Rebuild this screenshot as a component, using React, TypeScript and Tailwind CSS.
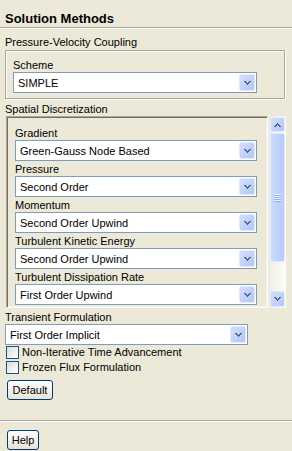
import React from "react";

const FONT = "font-['Liberation_Sans',Arial,sans-serif]";

function Chevron({ up }: { up?: boolean }) {
  return (
    <svg
      width="7"
      height="4"
      viewBox="0 0 7 4"
      shapeRendering="crispEdges"
      className={up ? "rotate-180" : ""}
    >
      <path fill="#4d6185" d="M0 0h2v1H0zM5 0h2v1H5zM1 1h2v1H1zM4 1h2v1H4zM2 2h3v1H2zM3 3h1v1H3z" />
    </svg>
  );
}

function ArrowBtn({ up, className }: { up?: boolean; className: string }) {
  return (
    <div
      className={`flex items-center justify-center rounded-[2px] border border-[#e3eafc] bg-gradient-to-br from-[#d3e0fd] to-[#b2c6f6] ${className}`}
    >
      <Chevron up={up} />
    </div>
  );
}

function Combo({ value, width }: { value: string; width: string }) {
  return (
    <div className={`flex h-[21px] border border-[#7f9db9] bg-white p-px ${width}`}>
      <div className="flex-1 overflow-hidden whitespace-nowrap pl-[3px] leading-[19px]">{value}</div>
      <ArrowBtn className="w-[16px]" />
    </div>
  );
}

function Label({ children, className = "" }: { children: React.ReactNode; className?: string }) {
  return <div className={`h-[15px] whitespace-nowrap leading-[17px] ${className}`}>{children}</div>;
}

function Check({ label }: { label: string }) {
  return (
    <div className="flex h-[15px] items-start pl-[6px]">
      <div className="mt-px h-[13px] w-[13px] border border-[#1c5180] bg-gradient-to-br from-[#dcdcd7] to-white" />
      <span className="ml-[3px] whitespace-nowrap leading-[15px]">{label}</span>
    </div>
  );
}

function XpButton({ label, width }: { label: string; width: string }) {
  return (
    <div
      className={`ml-[7px] flex h-[20px] items-center justify-center rounded-[3px] border border-[#003c74] bg-gradient-to-b from-white to-[#e6e3d6] leading-[18px] ${width}`}
    >
      {label}
    </div>
  );
}

function Separator() {
  return (
    <div>
      <div className="h-px bg-[#aca899]" />
      <div className="h-px bg-white" />
    </div>
  );
}

const spatial = [
  ["Gradient", "Green-Gauss Node Based"],
  ["Pressure", "Second Order"],
  ["Momentum", "Second Order Upwind"],
  ["Turbulent Kinetic Energy", "Second Order Upwind"],
  ["Turbulent Dissipation Rate", "First Order Upwind"],
];

export default function App() {
  return (
    <div className={`h-[451px] w-[292px] overflow-hidden bg-[#ece9d8] text-[11px] text-black ${FONT}`}>
      <div className="h-[27px] pl-[5px] pt-[11px] text-[13px] font-bold leading-[16px]">Solution Methods</div>
      <Separator />

      <Label className="mt-[5px] pl-[5px]">Pressure-Velocity Coupling</Label>
      <div className="ml-[5px] mt-px h-[49px] w-[280px] border border-[#aca899] pl-[7px] pt-[6px] shadow-[inset_1px_1px_0_#fff,1px_1px_0_#fff]">
        <Label>Scheme</Label>
        <Combo value="SIMPLE" width="w-[244px]" />
      </div>

      <Label className="mt-[2px] pl-[5px]">Spatial Discretization</Label>
      <div className="flex gap-px">
        <div className="ml-[6px] h-[192px] w-[262px] overflow-hidden border border-b-white border-l-[#aca899] border-r-white border-t-[#aca899] pl-[8px] pt-[8px] shadow-[inset_1px_1px_0_#716f64,inset_-1px_-1px_0_#f1efe2]">
          {spatial.map(([label, value], i) => (
            <div key={i}>
              <Label>{label}</Label>
              <Combo value={value} width="w-[242px]" />
            </div>
          ))}
        </div>
        <div className="flex h-[192px] w-[17px] flex-col bg-gradient-to-r from-[#eeede5] to-[#fdfdfa] p-px">
          <ArrowBtn up className="h-[15px]" />
          <div className="mt-px flex h-[129px] items-center justify-center rounded-[2px] border border-[#e3eafc] bg-gradient-to-r from-[#cbd9fd] to-[#b7cbf8]">
            <div className="flex flex-col">
              {[0, 1, 2, 3].map((n) => (
                <div key={n}>
                  <div className="h-px w-[7px] bg-[#eef4fe]" />
                  <div className="h-px w-[7px] bg-[#8cb0f8]" />
                </div>
              ))}
            </div>
          </div>
          <div className="flex-1" />
          <ArrowBtn className="h-[16px]" />
        </div>
      </div>

      <Label className="mt-px pl-[5px]">Transient Formulation</Label>
      <div className="pl-[5px]">
        <Combo value="First Order Implicit" width="w-[243px]" />
      </div>
      <Check label="Non-Iterative Time Advancement" />
      <Check label="Frozen Flux Formulation" />

      <div className="mt-[5px]">
        <XpButton label="Default" width="w-[46px]" />
      </div>

      <div className="mt-[20px]">
        <Separator />
      </div>

      <div className="mt-[8px]">
        <XpButton label="Help" width="w-[32px]" />
      </div>
    </div>
  );
}
